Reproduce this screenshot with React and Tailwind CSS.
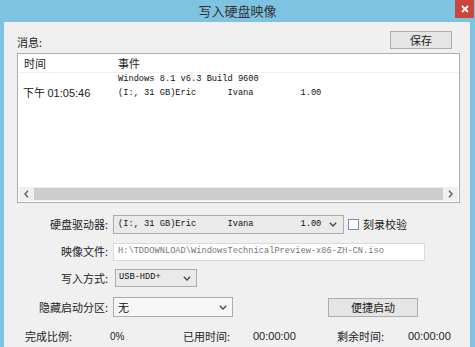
import React from 'react';

const cjk = "font-['Noto_Sans_CJK_SC','Noto_Sans',sans-serif]";
const mono = "font-['Liberation_Mono','Noto_Sans_CJK_SC',monospace]";
const sans = "font-['Liberation_Sans','Noto_Sans_CJK_SC',sans-serif]";

function Chevron({ className }) {
  return (
    <svg viewBox="0 0 8 5" className={className} fill="none" stroke="currentColor" strokeWidth="1.3">
      <path d="M0.8 0.8 L4 4 L7.2 0.8" />
    </svg>
  );
}

function Label({ children }) {
  return (
    <div className={`w-[104px] text-right text-[11px] text-[#222] ${cjk}`}>{children}</div>
  );
}

export default function App() {
  return (
    <div className="w-[475px] h-[347px] overflow-hidden bg-[#7fc3e3] flex flex-col">
      {/* title bar */}
      <div className="relative h-[22px] shrink-0 flex items-center justify-center">
        <span className={`text-[13px] text-[#333] ${cjk}`}>写入硬盘映像</span>
        <div className="absolute right-[1px] top-0 w-[19px] h-[18px] bg-[#c9463d] flex items-center justify-center">
          <svg viewBox="0 0 8 8" className="w-[8px] h-[8px]" stroke="white" strokeWidth="1.8">
            <path d="M1 1 L7 7 M7 1 L1 7" />
          </svg>
        </div>
      </div>

      <div className="flex-1 ml-[4px] mr-[5px] bg-[#f0f0f0] flex flex-col">
        {/* message header */}
        <div className="h-[31px] flex items-end justify-between pl-[13px] pr-[18px] pt-[9px]">
          <span className={`text-[11px] text-[#222] leading-none mb-[5px] ${cjk}`}>消息:</span>
          <button className={`mb-[4px] w-[62px] h-[18px] border border-[#adadad] bg-[#e5e5e5] text-[11px] text-[#222] leading-none ${cjk}`}>
            保存
          </button>
        </div>

        {/* list box */}
        <div className="ml-[13px] w-[443px] h-[150px] border border-[#abadb3] bg-white flex flex-col">
          <div className={`h-[19px] shrink-0 flex items-center text-[11px] text-[#222] border-b border-[#f0f0f0] ${cjk}`}>
            <span className="w-[100px] pl-[6px]">时间</span>
            <span>事件</span>
          </div>
          <div className="flex-1 flex flex-col leading-none">
            <div className="h-[13px] flex items-center">
              <span className="w-[100px]" />
              <span className={`text-[8.7px] text-[#111] whitespace-pre ${mono}`}>Windows 8.1 v6.3 Build 9600</span>
            </div>
            <div className="h-[14px] flex items-center">
              <span className={`w-[100px] pl-[5px] text-[11px] text-[#222] ${cjk}`}>
                下午 <span className={sans}>01:05:46</span>
              </span>
              <span className={`text-[8.7px] text-[#111] whitespace-pre ${mono}`}>(I:, 31 GB)Eric      Ivana         1.00</span>
            </div>
          </div>
          {/* horizontal scrollbar */}
          <div className="h-[14px] flex items-center bg-[#f0f0f0] mb-[1px] mx-[1px]">
            <div className="w-[15px] flex justify-center text-[#606060]">
              <svg viewBox="0 0 5 8" className="w-[5px] h-[8px]" fill="none" stroke="currentColor" strokeWidth="1.4">
                <path d="M4 0.8 L1 4 L4 7.2" />
              </svg>
            </div>
            <div className="flex-1 h-[12px] bg-[#cdcdcd]" />
            <div className="w-[15px] flex justify-center text-[#606060]">
              <svg viewBox="0 0 5 8" className="w-[5px] h-[8px]" fill="none" stroke="currentColor" strokeWidth="1.4">
                <path d="M1 0.8 L4 4 L1 7.2" />
              </svg>
            </div>
          </div>
        </div>

        {/* form rows */}
        <div className="mt-[12px] h-[19px] flex items-center gap-[5px]">
          <Label>硬盘驱动器:</Label>
          <div className="w-[231px] h-[19px] border border-[#acacac] bg-[#eaeaea] flex items-center pl-[4px] pr-[6px]">
            <span className={`flex-1 text-[8.7px] text-[#111] whitespace-pre ${mono}`}>(I:, 31 GB)Eric      Ivana         1.00</span>
            <Chevron className="w-[8px] h-[5px] text-[#444]" />
          </div>
          <div className="flex items-center gap-[4px] ml-[-1px]">
            <div className="w-[11px] h-[11px] border border-[#6f8fbf] bg-white" />
            <span className={`text-[11px] text-[#222] ${cjk}`}>刻录校验</span>
          </div>
        </div>

        <div className="mt-[8px] h-[19px] flex items-center gap-[5px]">
          <Label>映像文件:</Label>
          <div className="w-[312px] h-[18px] border border-[#dadada] bg-white flex items-center pl-[4px]">
            <span className={`text-[8.7px] text-[#777] whitespace-pre ${mono}`}>H:\TDDOWNLOAD\WindowsTechnicalPreview-x86-ZH-CN.iso</span>
          </div>
        </div>

        <div className="mt-[8px] h-[18px] flex items-center gap-[5px]">
          <Label>写入方式:</Label>
          <div className="ml-[2px] w-[82px] h-[18px] border border-[#acacac] bg-[#eaeaea] flex items-center pl-[3px] pr-[5px]">
            <span className={`flex-1 text-[8.7px] text-[#111] ${mono}`}>USB-HDD+</span>
            <Chevron className="w-[8px] h-[5px] text-[#444]" />
          </div>
        </div>

        <div className="mt-[10px] h-[20px] flex items-center gap-[5px]">
          <Label>隐藏启动分区:</Label>
          <div className="w-[120px] h-[20px] border border-[#acacac] bg-[#f7f7f7] flex items-center pl-[4px] pr-[5px]">
            <span className={`flex-1 text-[11px] text-[#111] ${cjk}`}>无</span>
            <Chevron className="w-[8px] h-[5px] text-[#444]" />
          </div>
          <button className={`ml-[90px] w-[90px] h-[19px] border border-[#adadad] bg-[#e5e5e5] text-[11px] text-[#222] leading-none ${cjk}`}>
            便捷启动
          </button>
        </div>

        <div className={`mt-[11px] h-[16px] flex items-center pl-[21px] text-[11px] text-[#222] ${cjk}`}>
          <span className="w-[85px]">完成比例:</span>
          <span className={`w-[73px] text-[10px] ${sans}`}>0%</span>
          <span className="w-[70px]">已用时间:</span>
          <span className={`w-[84px] ${sans}`}>00:00:00</span>
          <span className="w-[71px]">剩余时间:</span>
          <span className={sans}>00:00:00</span>
        </div>
      </div>
    </div>
  );
}
